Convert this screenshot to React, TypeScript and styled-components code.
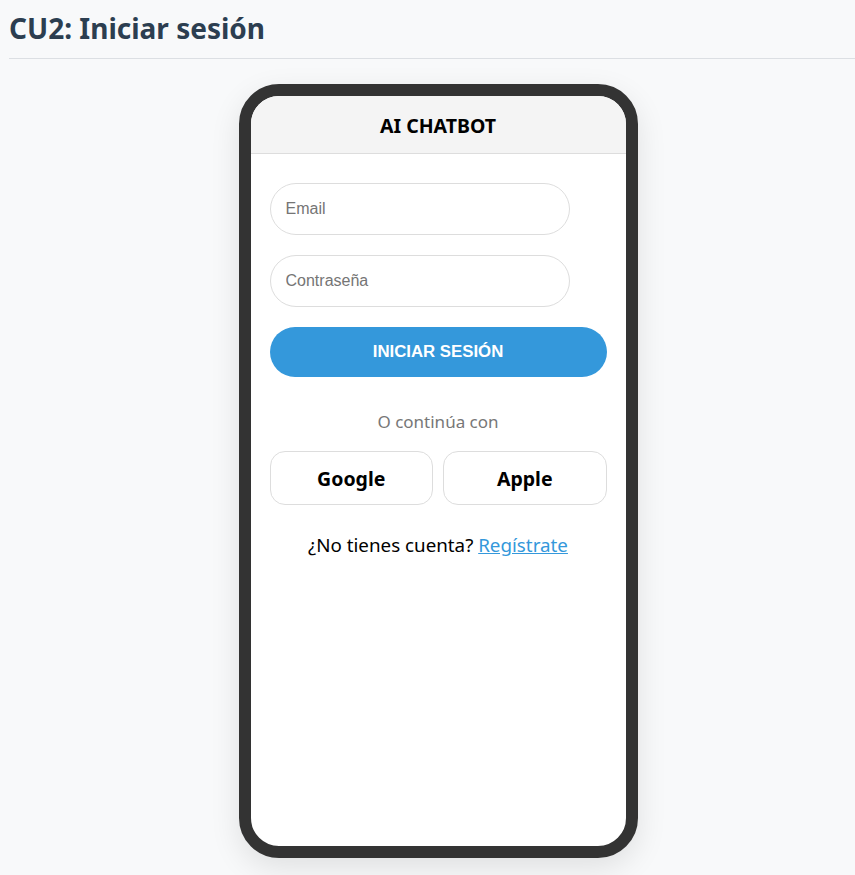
import React from "react";
import styled, { createGlobalStyle } from "styled-components";

const Global = createGlobalStyle`
  html, body { margin: 0; padding: 0; background: #f8f9fa; }
  body { font-family: "Noto Sans", "Open Sans", sans-serif; }
  * { box-sizing: border-box; }
`;

const Page = styled.div`
  padding: 0 0 0 9px;
  min-height: 875px;
`;

const Title = styled.h1`
  margin: 0;
  padding: 11px 0 12px;
  font-size: 28px;
  line-height: 35px;
  font-weight: 700;
  color: #2c3e50;
  border-bottom: 1px solid #dcdfe3;
`;

const Stage = styled.div`
  display: flex;
  justify-content: center;
  padding: 25px 0 17px 12px;
`;

const Phone = styled.div`
  width: 399px;
  height: 774px;
  border: 12px solid #333;
  border-radius: 40px;
  background: #fff;
  overflow: hidden;
  box-shadow: 0 10px 30px rgba(0, 0, 0, 0.1);
  display: flex;
  flex-direction: column;
`;

const AppBar = styled.div`
  height: 58px;
  padding-top: 2px;
  background: #f4f4f4;
  border-bottom: 1px solid #ddd;
  display: flex;
  align-items: center;
  justify-content: center;
  font-size: 19.5px;
  font-weight: 700;
  color: #000;
`;

const Form = styled.div`
  padding: 29px 19px 20px;
  display: flex;
  flex-direction: column;
`;

const Input = styled.input`
  width: 300px;
  height: 52px;
  border: 1px solid #ddd;
  border-radius: 26px;
  padding: 0 15px;
  font-family: "Liberation Sans", Arial, sans-serif;
  font-size: 16px;
  margin-bottom: 20px;
  outline: none;
  &::placeholder { color: #757575; }
`;

const Primary = styled.button`
  width: 337px;
  height: 50px;
  border: none;
  border-radius: 25px;
  background: #3498db;
  color: #fff;
  font-family: "Liberation Sans", Arial, sans-serif;
  font-weight: 700;
  font-size: 16.8px;
`;

const Divider = styled.div`
  text-align: center;
  color: #777;
  font-size: 17px;
  margin: 34px 0 18px;
  line-height: 22px;
`;

const SocialRow = styled.div`
  display: grid;
  grid-template-columns: 1fr 1fr;
  gap: 10px;
  width: 337px;
`;

const Social = styled.button`
  height: 54px;
  padding-top: 2px;
  border: 1px solid #ddd;
  border-radius: 15px;
  background: #fff;
  font-family: "Noto Sans", sans-serif;
  font-weight: 700;
  font-size: 19.5px;
  color: #000;
`;

const Footer = styled.p`
  margin: 28px 0 0;
  width: 337px;
  text-align: center;
  font-size: 18.8px;
  line-height: 24px;
  color: #000;
  a { color: #3498db; text-decoration: underline; }
`;

export default function App() {
  return (
    <>
      <Global />
      <Page>
        <Title>CU2: Iniciar sesión</Title>
        <Stage>
          <Phone>
            <AppBar>AI CHATBOT</AppBar>
            <Form>
              <Input placeholder="Email" />
              <Input placeholder="Contraseña" type="password" />
              <Primary>INICIAR SESIÓN</Primary>
              <Divider>O continúa con</Divider>
              <SocialRow>
                <Social>Google</Social>
                <Social>Apple</Social>
              </SocialRow>
              <Footer>
                ¿No tienes cuenta? <a href="#">Regístrate</a>
              </Footer>
            </Form>
          </Phone>
        </Stage>
      </Page>
    </>
  );
}
